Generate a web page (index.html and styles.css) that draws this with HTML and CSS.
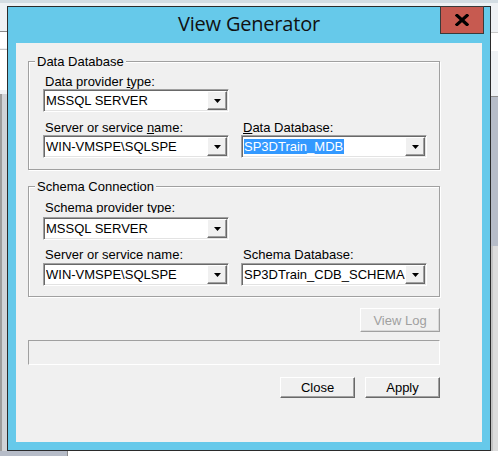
FILE: index.html
```html
<!DOCTYPE html>
<html lang="en">
<head>
    <meta charset="UTF-8">
    <title>View Generator</title>
    <link rel="stylesheet" href="styles.css">
</head>
<body>

    <div class="desktop">
        <!-- bits of the windows lying behind the dialog -->
        <div class="behind behind-top"></div>
        <div class="behind behind-left-a"></div>
        <div class="behind behind-left-b"></div>
        <div class="behind behind-left-c"></div>
        <div class="behind behind-right-a"></div>
        <div class="behind behind-right-b"></div>
        <div class="behind behind-right-c"></div>
        <div class="behind behind-bottom"></div>

        <!-- View Generator dialog -->
        <div class="window" role="dialog" aria-label="View Generator">
            <div class="titlebar">
                <span class="title">View Generator</span>
                <button class="close-btn" aria-label="Close">
                    <svg width="14" height="12" viewBox="0 0 14 12">
                        <path d="M2 1.5 L12 10.5 M12 1.5 L2 10.5" stroke="#000" stroke-width="3.2" stroke-linecap="square"/>
                    </svg>
                </button>
            </div>

            <div class="client">
                <fieldset class="group">
                    <legend>Data Database</legend>
                    <div class="fields">
                        <div class="field">
                            <label>Data provider <u>t</u>ype:</label>
                            <div class="combo">
                                <span class="combo-text">MSSQL SERVER</span>
                                <span class="combo-btn"><svg width="7" height="4" viewBox="0 0 7 4"><polygon points="0,0 7,0 3.5,4" fill="#000"/></svg></span>
                            </div>
                        </div>
                        <div></div>
                        <div class="field">
                            <label>Server or service <u>n</u>ame:</label>
                            <div class="combo">
                                <span class="combo-text">WIN-VMSPE\SQLSPE</span>
                                <span class="combo-btn"><svg width="7" height="4" viewBox="0 0 7 4"><polygon points="0,0 7,0 3.5,4" fill="#000"/></svg></span>
                            </div>
                        </div>
                        <div class="field">
                            <label><u>D</u>ata Database:</label>
                            <div class="combo">
                                <span class="combo-text"><span class="selected">SP3DTrain_MDB</span></span>
                                <span class="combo-btn"><svg width="7" height="4" viewBox="0 0 7 4"><polygon points="0,0 7,0 3.5,4" fill="#000"/></svg></span>
                            </div>
                        </div>
                    </div>
                </fieldset>

                <fieldset class="group group-schema">
                    <legend>Schema Connection</legend>
                    <div class="fields">
                        <div class="field">
                            <label class="label-short">Schema provider type:</label>
                            <div class="combo">
                                <span class="combo-text">MSSQL SERVER</span>
                                <span class="combo-btn"><svg width="7" height="4" viewBox="0 0 7 4"><polygon points="0,0 7,0 3.5,4" fill="#000"/></svg></span>
                            </div>
                        </div>
                        <div></div>
                        <div class="field">
                            <label>Server or service name:</label>
                            <div class="combo">
                                <span class="combo-text">WIN-VMSPE\SQLSPE</span>
                                <span class="combo-btn"><svg width="7" height="4" viewBox="0 0 7 4"><polygon points="0,0 7,0 3.5,4" fill="#000"/></svg></span>
                            </div>
                        </div>
                        <div class="field">
                            <label>Schema Database:</label>
                            <div class="combo">
                                <span class="combo-text">SP3DTrain_CDB_SCHEMA</span>
                                <span class="combo-btn"><svg width="7" height="4" viewBox="0 0 7 4"><polygon points="0,0 7,0 3.5,4" fill="#000"/></svg></span>
                            </div>
                        </div>
                    </div>
                </fieldset>

                <button class="btn btn-log" disabled>View Log</button>

                <div class="status"></div>

                <div class="actions">
                    <button class="btn">Close</button>
                    <button class="btn">Apply</button>
                </div>
            </div>
        </div>
    </div>

</body>
</html>
```

FILE: styles.css
```css
body {
    margin: 0;
    font-family: "Liberation Sans", Arial, sans-serif;
    font-size: 13px;
    color: #000;
}

.desktop {
    position: relative;
    width: 498px;
    height: 456px;
    overflow: hidden;
    background: #eef1f4;
}

/* windows behind the dialog */
.behind {
    position: absolute;
}

.behind-top {
    left: 0;
    right: 0;
    top: 0;
    height: 3px;
    background: #d3dce2;
}

.behind-left-a {
    left: 0;
    width: 7px;
    top: 31px;
    height: 16px;
    background: #fff;
    border-top: 1px solid #8a8a8a;
}

.behind-left-b {
    left: 0;
    width: 7px;
    top: 49px;
    height: 40px;
    background: #fff;
    border-top: 1px solid #c4c4c4;
}

.behind-left-c {
    left: 0;
    width: 5px;
    top: 94px;
    bottom: 0;
    background: #cfd2d6;
    border-left: 2px solid #9c9c9c;
}

.behind-right-a {
    left: 491px;
    right: 0;
    top: 32px;
    height: 18px;
    background: #fff;
    border-top: 1px solid #c8c8c8;
}

.behind-right-b {
    left: 491px;
    right: 0;
    top: 96px;
    height: 150px;
    background: #b6bcc8;
    border-top: 1px solid #8c8c8c;
}

.behind-right-c {
    left: 491px;
    right: 0;
    top: 246px;
    bottom: 0;
    background: #dcdcdc;
    border-left: 2px solid #c4c4c4;
}

.behind-bottom {
    left: 0;
    right: 0;
    top: 451px;
    bottom: 0;
    background: linear-gradient(to right, #b6bcc8 0, #b6bcc8 67px, #8a8a8a 67px, #8a8a8a 68px, #fff 68px);
}

/* dialog frame */
.window {
    position: absolute;
    left: 7px;
    top: 6px;
    width: 484px;
    height: 445px;
    box-sizing: border-box;
    border: 1px solid #2b2b2b;
    background: #66c9ea;
    padding: 0 8px 8px 8px;
    display: flex;
    flex-direction: column;
}

.titlebar {
    position: relative;
    height: 36px;
    flex-shrink: 0;
    display: flex;
    justify-content: center;
}

.title {
    font-family: "Open Sans", "Noto Sans", sans-serif;
    font-size: 20px;
    line-height: 34px;
    color: #111;
    letter-spacing: -0.2px;
}

.close-btn {
    position: absolute;
    top: -1px;
    right: -2px;
    width: 44px;
    height: 28px;
    box-sizing: border-box;
    margin: 0;
    padding: 0 0 1px 0;
    border: 1px solid #3a3a3a;
    background: #c75a50;
    display: flex;
    align-items: center;
    justify-content: center;
}

.client {
    flex: 1;
    background: #f0f0f0;
    padding: 11px 0 0 12px;
    display: flex;
    flex-direction: column;
    align-items: flex-start;
}

/* group boxes */
.group {
    margin: 0;
    width: 412px;
    box-sizing: border-box;
    min-inline-size: 0;
    border: 1px solid #a0a0a0;
    box-shadow: 1px 1px 0 #fff, inset 1px 1px 0 #fff;
    padding: 6px 0 11px 6px;
}

.group legend {
    padding: 0 2px;
    line-height: 15px;
    background: #f0f0f0;
}

.group-schema {
    margin-top: 9px;
    padding-top: 7px;
    padding-bottom: 10px;
}

.fields {
    margin-left: 8px;
    display: grid;
    grid-template-columns: 186px 186px;
    column-gap: 12px;
    row-gap: 9px;
}

.group-schema .fields {
    row-gap: 8px;
}

.field label {
    display: block;
    line-height: 14px;
    padding-left: 2px;
}

.group-schema .field label {
    margin-bottom: 1px;
}

/* the label control is shorter than its text, so descenders get cut */
.group-schema .field .label-short {
    height: 12px;
    overflow: hidden;
    margin-bottom: 4px;
}

/* drop-down lists */
.combo {
    height: 23px;
    box-sizing: border-box;
    border: 1px solid;
    border-color: #a0a0a0 #fff #fff #a0a0a0;
    box-shadow: inset 1px 1px 0 #696969, inset -1px -1px 0 #e3e3e3;
    background: #fff;
    padding: 1px 1px 1px 2px;
    display: flex;
}

.combo-text {
    flex: 1;
    line-height: 19px;
    white-space: nowrap;
    overflow: hidden;
}

.selected {
    background: #3399ff;
    color: #fff;
    padding: 0 1px;
    margin-left: -1px;
}

.combo-btn {
    width: 20px;
    height: 19px;
    box-sizing: border-box;
    border: 1px solid;
    border-color: #fff #696969 #696969 #fff;
    box-shadow: inset -1px -1px 0 #a0a0a0;
    background: #f0f0f0;
    display: flex;
    align-items: center;
    justify-content: center;
    padding-top: 1px;
}

/* push buttons */
.btn {
    margin: 0;
    padding: 0;
    width: 75px;
    height: 21px;
    box-sizing: border-box;
    font-family: "Liberation Sans", Arial, sans-serif;
    font-size: 13px;
    color: #000;
    background: #f0f0f0;
    border: 1px solid;
    border-color: #fff #696969 #696969 #fff;
    box-shadow: inset -1px -1px 0 #a0a0a0;
}

.btn-log {
    align-self: flex-end;
    margin: 11px 42px 0 0;
    width: 80px;
    height: 24px;
    color: #a0a0a0;
    border-color: #fff #a0a0a0 #a0a0a0 #fff;
    box-shadow: inset -1px -1px 0 #d8d8d8;
}

.status {
    margin-top: 8px;
    width: 412px;
    height: 25px;
    box-sizing: border-box;
    border: 1px solid;
    border-color: #a0a0a0 #fff #fff #a0a0a0;
}

.actions {
    margin-top: 12px;
    width: 412px;
    display: flex;
    justify-content: flex-end;
    gap: 10px;
}
```
